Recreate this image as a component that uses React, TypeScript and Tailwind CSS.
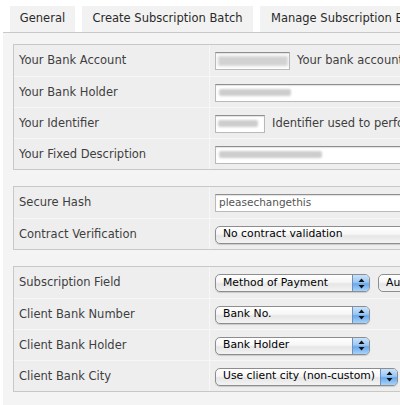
import React from "react";

const F = "font-['DejaVu_Sans',sans-serif]";

function Blur({ w, h = 7 }: { w: number; h?: number }) {
  return (
    <div
      className="bg-[#cdcdcd] blur-[1.2px] rounded-[2px]"
      style={{ width: w, height: h }}
    />
  );
}

function TextBox({ width, children, grow }: { width?: number; children?: React.ReactNode; grow?: boolean }) {
  return (
    <div
      className={`h-[18px] shrink-0 bg-white border border-[#b9b9b9] border-t-[#8f8f8f] shadow-[inset_0_1px_1px_rgba(0,0,0,0.12)] flex items-center pl-[2px] overflow-hidden ${grow ? "w-[400px]" : ""}`}
      style={width ? { width } : undefined}
    >
      {children}
    </div>
  );
}

function Arrows() {
  return (
    <svg width="7" height="11" viewBox="0 0 7 11">
      <path d="M3.5 0.5 L6.5 4 L0.5 4 Z" fill="#111" />
      <path d="M3.5 10.5 L6.5 7 L0.5 7 Z" fill="#111" />
    </svg>
  );
}

function Select({ label, width, arrow = true }: { label: string; width: number; arrow?: boolean }) {
  return (
    <div
      className="h-[18px] shrink-0 rounded-[5px] border border-[#8d8d8d] bg-[linear-gradient(#ffffff_0%,#f6f6f6_45%,#e6e6e6_55%,#f3f3f3_100%)] shadow-[0_1px_1px_rgba(0,0,0,0.15)] flex items-stretch overflow-hidden"
      style={{ width }}
    >
      <div className="flex-1 flex items-center pl-[7px] text-[10.8px] text-black whitespace-nowrap overflow-hidden">
        {label}
      </div>
      {arrow && (
        <div className="w-[17px] shrink-0 border-l border-[#6f8fc2] bg-[linear-gradient(#c9e2fb_0%,#9cc8f3_45%,#6aa8ec_55%,#a6d4fb_100%)] flex items-center justify-center">
          <Arrows />
        </div>
      )}
    </div>
  );
}

function Row({ label, first, children }: { label: string; first?: boolean; children?: React.ReactNode }) {
  return (
    <div className={`flex h-[31px] ${first ? "" : "border-t border-[#f7f7f7]"}`}>
      <div className="w-[196px] shrink-0 border-r border-[#f7f7f7] flex items-center pl-[5px] pt-[1px] text-[11.5px] text-[#3e3e3e] whitespace-nowrap">
        {label}
      </div>
      <div className="flex-1 flex items-center gap-[7px] pl-[5px] pt-[1px] whitespace-nowrap text-[11.5px] text-[#3e3e3e]">
        {children}
      </div>
    </div>
  );
}

function Section({ children }: { children: React.ReactNode }) {
  return (
    <div className="ml-[10px] w-[600px] shrink-0 border border-[#c8c8c8] bg-[#eeeeee]">{children}</div>
  );
}

export default function App() {
  return (
    <div className={`w-[400px] h-[405px] overflow-hidden bg-white ${F}`}>
      <div className="flex gap-[7px] pl-[10px] pt-[6px] h-[32px] w-[700px]">
        <div className="w-[65px] shrink-0 h-[26px] bg-[#f2f2f2] flex items-center justify-center text-[11.5px] text-[#2a2a2a]">General</div>
        <div className="w-[171px] shrink-0 h-[26px] bg-[#f2f2f2] flex items-center justify-center text-[11.5px] text-[#2a2a2a] whitespace-nowrap">Create Subscription Batch</div>
        <div className="w-[200px] shrink-0 h-[26px] bg-[#f2f2f2] flex items-center pl-[11px] text-[11.5px] text-[#2a2a2a] whitespace-nowrap">Manage Subscription Batches</div>
      </div>
      <div className="ml-[3px] h-[373px] border-t border-[#c9c9c9] bg-[#f4f4f4] pt-[11px] flex flex-col gap-[16px] overflow-hidden">
        <Section>
          <Row label="Your Bank Account" first>
            <TextBox width={75}>
              <div className="bg-[#d2d2d2] blur-[1.5px] w-[70px] h-[10px]" />
            </TextBox>
            <span>Your bank account number</span>
          </Row>
          <Row label="Your Bank Holder">
            <TextBox grow>
              <div className="pl-[1px]"><Blur w={72} /></div>
            </TextBox>
          </Row>
          <Row label="Your Identifier">
            <TextBox width={50}>
              <Blur w={40} />
            </TextBox>
            <span>Identifier used to perform the batch</span>
          </Row>
          <Row label="Your Fixed Description">
            <TextBox grow>
              <div className="pl-[1px]"><Blur w={103} /></div>
            </TextBox>
          </Row>
        </Section>
        <Section>
          <Row label="Secure Hash" first>
            <TextBox grow>
              <span className="pl-[1px] text-[10.5px] text-[#555]">pleasechangethis</span>
            </TextBox>
          </Row>
          <Row label="Contract Verification">
            <Select label="No contract validation" width={300} arrow={false} />
          </Row>
        </Section>
        <Section>
          <Row label="Subscription Field" first>
            <Select label="Method of Payment" width={155} />
            <div className="h-[18px] w-[90px] shrink-0 ml-[1px] rounded-[5px] border border-[#8d8d8d] bg-[linear-gradient(#ffffff_0%,#f6f6f6_45%,#e6e6e6_55%,#f3f3f3_100%)] flex items-center pl-[7px] text-[10.8px] text-black">Automatic</div>
          </Row>
          <Row label="Client Bank Number">
            <Select label="Bank No." width={155} />
          </Row>
          <Row label="Client Bank Holder">
            <Select label="Bank Holder" width={155} />
          </Row>
          <Row label="Client Bank City">
            <Select label="Use client city (non-custom)" width={183} />
          </Row>
        </Section>
      </div>
    </div>
  );
}
